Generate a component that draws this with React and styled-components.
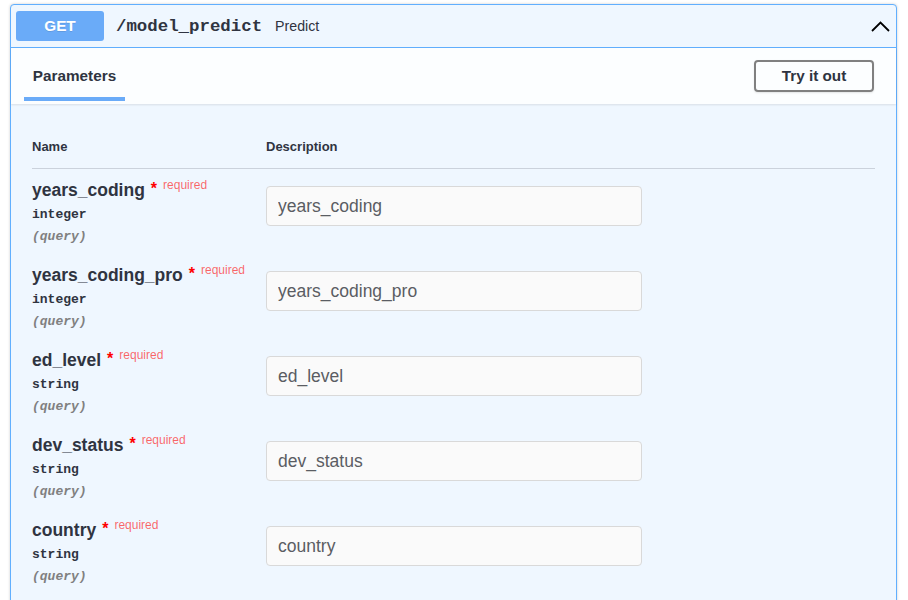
import React from "react";
import styled, { createGlobalStyle } from "styled-components";

const GlobalStyle = createGlobalStyle`
  body {
    margin: 0;
    background: #ffffff;
    font-family: "Liberation Sans", Arial, sans-serif;
    color: #3b4151;
  }
`;

const Block = styled.div`
  margin: 4px 11px 0 10px;
  border: 1px solid #61affe;
  border-radius: 4px;
  background: #eff7ff;
  box-shadow: 0 0 3px rgba(0, 0, 0, 0.19);
`;

const Summary = styled.div`
  display: flex;
  align-items: center;
  padding: 6px 5px;
  border-bottom: 1px solid #61affe;
`;

const Method = styled.div`
  width: 88px;
  height: 30px;
  border-radius: 3px;
  background: #6aabf8;
  color: #ffffff;
  font-size: 15.3px;
  font-weight: 700;
  display: flex;
  align-items: center;
  justify-content: center;
  text-shadow: 0 1px 0 rgba(0, 0, 0, 0.1);
`;

const Path = styled.span`
  font-family: "Liberation Mono", "Courier New", monospace;
  font-size: 17.4px;
  font-weight: 700;
  color: #2f3441;
  padding: 0 13px 0 12px;
`;

const Summ = styled.span`
  font-size: 14.2px;
  color: #2f3441;
`;

const Chevron = styled.svg`
  margin-left: auto;
  margin-right: 1px;
`;

const SectionHeader = styled.div`
  display: flex;
  align-items: center;
  justify-content: space-between;
  height: 56px;
  padding: 0 22px 0 13px;
  background: rgba(255, 255, 255, 0.8);
  box-shadow: 0 1px 2px rgba(0, 0, 0, 0.1);
`;

const Tab = styled.div`
  position: relative;
  align-self: stretch;
  display: flex;
  align-items: center;
  justify-content: center;
  width: 101px;
  font-size: 15.3px;
  font-weight: 700;
  color: #2f3441;

  &::after {
    content: "";
    position: absolute;
    left: 0;
    right: 0;
    bottom: 3px;
    height: 4px;
    background: #6aabf8;
  }
`;

const TryButton = styled.button`
  width: 120px;
  height: 32px;
  border: 2px solid #808080;
  border-radius: 4px;
  background: transparent;
  font-family: "Liberation Sans", Arial, sans-serif;
  font-size: 15.3px;
  font-weight: 700;
  color: #2f3441;
  box-shadow: 0 1px 2px rgba(0, 0, 0, 0.1);
  cursor: pointer;
`;

const Table = styled.div`
  padding: 0 21px 20px;
`;

const HeadRow = styled.div`
  display: grid;
  grid-template-columns: 234px 1fr;
  padding: 35px 0 14px;
  border-bottom: 1px solid rgba(59, 65, 81, 0.2);
  font-size: 13px;
  font-weight: 700;
  line-height: 15px;
  color: #2f3441;
`;

const ParamRow = styled.div`
  display: grid;
  grid-template-columns: 234px 1fr;
  height: 85px;
`;

const NameCell = styled.div`
  padding-top: 11px;
`;

const ParamName = styled.div`
  font-size: 17.5px;
  font-weight: 700;
  line-height: 20px;
  color: #2f3441;
  white-space: nowrap;
`;

const Star = styled.span`
  position: relative;
  top: -2px;
  margin-left: 6px;
  font-size: 16px;
  color: #ff0000;
`;

const Required = styled.span`
  position: relative;
  top: -7.5px;
  margin-left: 6px;
  font-size: 12px;
  font-weight: 400;
  color: rgba(255, 0, 0, 0.6);
`;

const ParamType = styled.div`
  margin-top: 5px;
  font-family: "Liberation Mono", "Courier New", monospace;
  font-size: 13px;
  font-weight: 700;
  line-height: 15px;
  color: #2f3441;
`;

const ParamIn = styled.div`
  margin-top: 7px;
  font-family: "Liberation Mono", "Courier New", monospace;
  font-size: 13px;
  font-weight: 700;
  font-style: italic;
  line-height: 15px;
  color: #808080;
`;

const Input = styled.input`
  box-sizing: border-box;
  width: 376px;
  height: 40px;
  margin-top: 17px;
  padding: 0 11px;
  border: 1px solid #d9d9d9;
  border-radius: 4px;
  background: #fafafa;
  font-family: "Liberation Sans", Arial, sans-serif;
  font-size: 17.5px;
  color: #3b4151;
  outline: none;

  &::placeholder {
    color: #5a5d63;
    opacity: 1;
  }
`;

const params = [
  { name: "years_coding", type: "integer" },
  { name: "years_coding_pro", type: "integer" },
  { name: "ed_level", type: "string" },
  { name: "dev_status", type: "string" },
  { name: "country", type: "string" },
];

export default function App() {
  return (
    <>
      <GlobalStyle />
      <Block>
        <Summary>
          <Method>GET</Method>
          <Path>/model_predict</Path>
          <Summ>Predict</Summ>
          <Chevron width="19" height="11" viewBox="0 0 19 11">
            <polyline
              points="1,10 9.5,1.5 18,10"
              fill="none"
              stroke="#000"
              strokeWidth="1.8"
            />
          </Chevron>
        </Summary>
        <SectionHeader>
          <Tab>Parameters</Tab>
          <TryButton>Try it out</TryButton>
        </SectionHeader>
        <Table>
          <HeadRow>
            <div>Name</div>
            <div>Description</div>
          </HeadRow>
          {params.map((p) => (
            <ParamRow key={p.name}>
              <NameCell>
                <ParamName>
                  {p.name}
                  <Star>*</Star>
                  <Required>required</Required>
                </ParamName>
                <ParamType>{p.type}</ParamType>
                <ParamIn>(query)</ParamIn>
              </NameCell>
              <div>
                <Input placeholder={p.name} readOnly />
              </div>
            </ParamRow>
          ))}
        </Table>
      </Block>
    </>
  );
}
